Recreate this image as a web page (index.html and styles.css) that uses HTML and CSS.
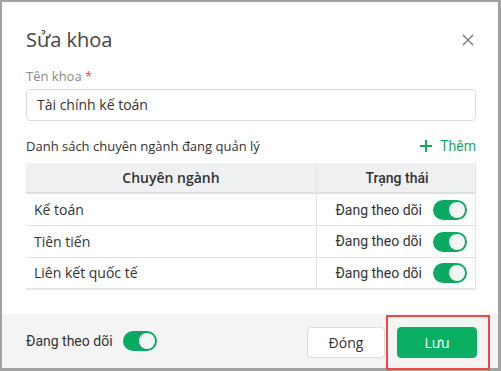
FILE: index.html
```html
<!DOCTYPE html>
<html lang="vi">
<head>
<meta charset="utf-8">
<link rel="stylesheet" href="styles.css">
</head>
<body>
<div class="modal">
  <div class="modal-body">
    <div class="modal-header">
      <h1 class="title">Sửa khoa</h1>
      <svg class="close" width="12" height="12" viewBox="0 0 12 12"><path d="M1 1L11 11M11 1L1 11" stroke="#7a7a82" stroke-width="1.4" fill="none"/></svg>
    </div>
    <label class="label">Tên khoa <span class="req">*</span></label>
    <div class="input">Tài chính kế toán</div>
    <div class="list-head">
      <span class="list-title">Danh sách chuyên ngành đang quản lý</span>
      <span class="add"><svg width="12" height="12" viewBox="0 0 12 12"><path d="M6 0V12M0 6H12" stroke="#16a862" stroke-width="2" fill="none"/></svg>Thêm</span>
    </div>
    <table class="grid">
      <thead>
        <tr><th class="c1">Chuyên ngành</th><th class="c2">Trạng thái</th></tr>
      </thead>
      <tbody>
        <tr><td class="c1">Kế toán</td><td class="c2"><span class="status">Đang theo dõi</span><span class="toggle"></span></td></tr>
        <tr><td class="c1">Tiên tiến</td><td class="c2"><span class="status">Đang theo dõi</span><span class="toggle"></span></td></tr>
        <tr><td class="c1">Liên kết quốc tế</td><td class="c2"><span class="status">Đang theo dõi</span><span class="toggle"></span></td></tr>
      </tbody>
    </table>
  </div>
  <div class="footer">
    <div class="follow"><span>Đang theo dõi</span><span class="toggle"></span></div>
    <div class="actions">
      <button class="btn btn-close">Đóng</button>
      <button class="btn btn-save">Lưu</button>
      <span class="highlight"></span>
    </div>
  </div>
</div>
</body>
</html>
```
FILE: styles.css
```css
* { box-sizing: border-box; }
html, body { margin: 0; height: 100%; }
body {
  background: #a2a2a2;
  padding: 2px 3px 3px 2px;
  font-family: "Open Sans", "Noto Sans", sans-serif;
  color: #333;
}
.modal {
  background: #fff;
  height: 100%;
  display: flex;
  flex-direction: column;
}
.modal-body {
  flex: 1;
  padding: 22px 22px 0 24px;
  display: flex;
  flex-direction: column;
}
.modal-header {
  display: flex;
  justify-content: space-between;
  align-items: center;
  height: 32px;
}
.title {
  margin: 0;
  font-size: 20px;
  font-weight: 400;
  color: #444;
  line-height: 28px;
}
.close { margin-right: 2px; }
.label {
  margin-top: 11px;
  font-size: 13px;
  line-height: 18px;
  color: #8a8a8a;
}
.req { color: #f04848; }
.input {
  margin-top: 4px;
  height: 32px;
  border: 1px solid #dcdcdc;
  border-radius: 4px;
  padding: 0 10px;
  font-size: 14px;
  line-height: 30px;
  color: #333;
}
.list-head {
  margin-top: 13px;
  display: flex;
  justify-content: space-between;
  align-items: center;
  height: 24px;
}
.list-title { font-size: 13px; color: #333; }
.add {
  display: flex;
  align-items: center;
  gap: 8px;
  font-family: Roboto, sans-serif;
  font-size: 14px;
  color: #16a862;
}
.grid {
  margin-top: 5px;
  border-collapse: collapse;
  width: 100%;
  font-size: 14px;
}
.grid th {
  background: #eef0f2;
  height: 30px;
  font-weight: 600;
  color: #333;
  border-bottom: 2px solid #e0e0e0;
  text-align: center;
  padding: 0;
}
.grid th.c2 { font-family: Roboto, sans-serif; font-weight: 500; padding-left: 2px; }
.grid td {
  height: 32px;
  border-bottom: 1px solid #e3e3e3;
  padding: 0 0 0 8px;
  color: #333;
}
.grid tbody tr:last-child td { border-bottom: 2px solid #e6e6e6; }
.grid .c2 {
  width: 159px;
  border-left: 1px solid #e3e3e3;
  border-right: 1px solid #e3e3e3;
}
.grid td.c2 {
  text-align: right;
  padding: 0 8px 0 0;
  white-space: nowrap;
}
.status {
  font-family: Roboto, sans-serif;
  font-size: 14px;
  color: #333;
  vertical-align: middle;
}
.toggle {
  display: inline-block;
  vertical-align: middle;
  position: relative;
  width: 34px;
  height: 20px;
  border-radius: 10px;
  background: #0aaa62;
  margin-left: 11px;
}
.toggle::after {
  content: "";
  position: absolute;
  right: 2px;
  top: 2px;
  width: 16px;
  height: 16px;
  border-radius: 50%;
  background: #f4f4f6;
}
.footer {
  height: 54px;
  background: #f4f4f4;
  display: flex;
  justify-content: space-between;
  align-items: center;
  padding: 0 21px 0 24px;
}
.follow {
  display: flex;
  align-items: center;
  font-family: Roboto, sans-serif;
  font-size: 14px;
  color: #333;
}
.follow .toggle { margin-left: 10px; }
.actions {
  position: relative;
  display: flex;
  gap: 12px;
  margin-top: 2px;
}
.btn {
  height: 31px;
  border-radius: 4px;
  font-family: "Open Sans", sans-serif;
  font-size: 14px;
  cursor: pointer;
}
.btn-close {
  width: 78px;
  background: #fff;
  border: 1px solid #dcdcdc;
  color: #333;
  font-weight: 500;
}
.btn-save {
  width: 80px;
  background: #0aaf64;
  border: 1px solid #0aaf64;
  color: #fff;
}
.highlight {
  position: absolute;
  left: 79px;
  right: -13px;
  top: -12px;
  bottom: -12px;
  border: 2px solid #f04646;
  pointer-events: none;
}
```
